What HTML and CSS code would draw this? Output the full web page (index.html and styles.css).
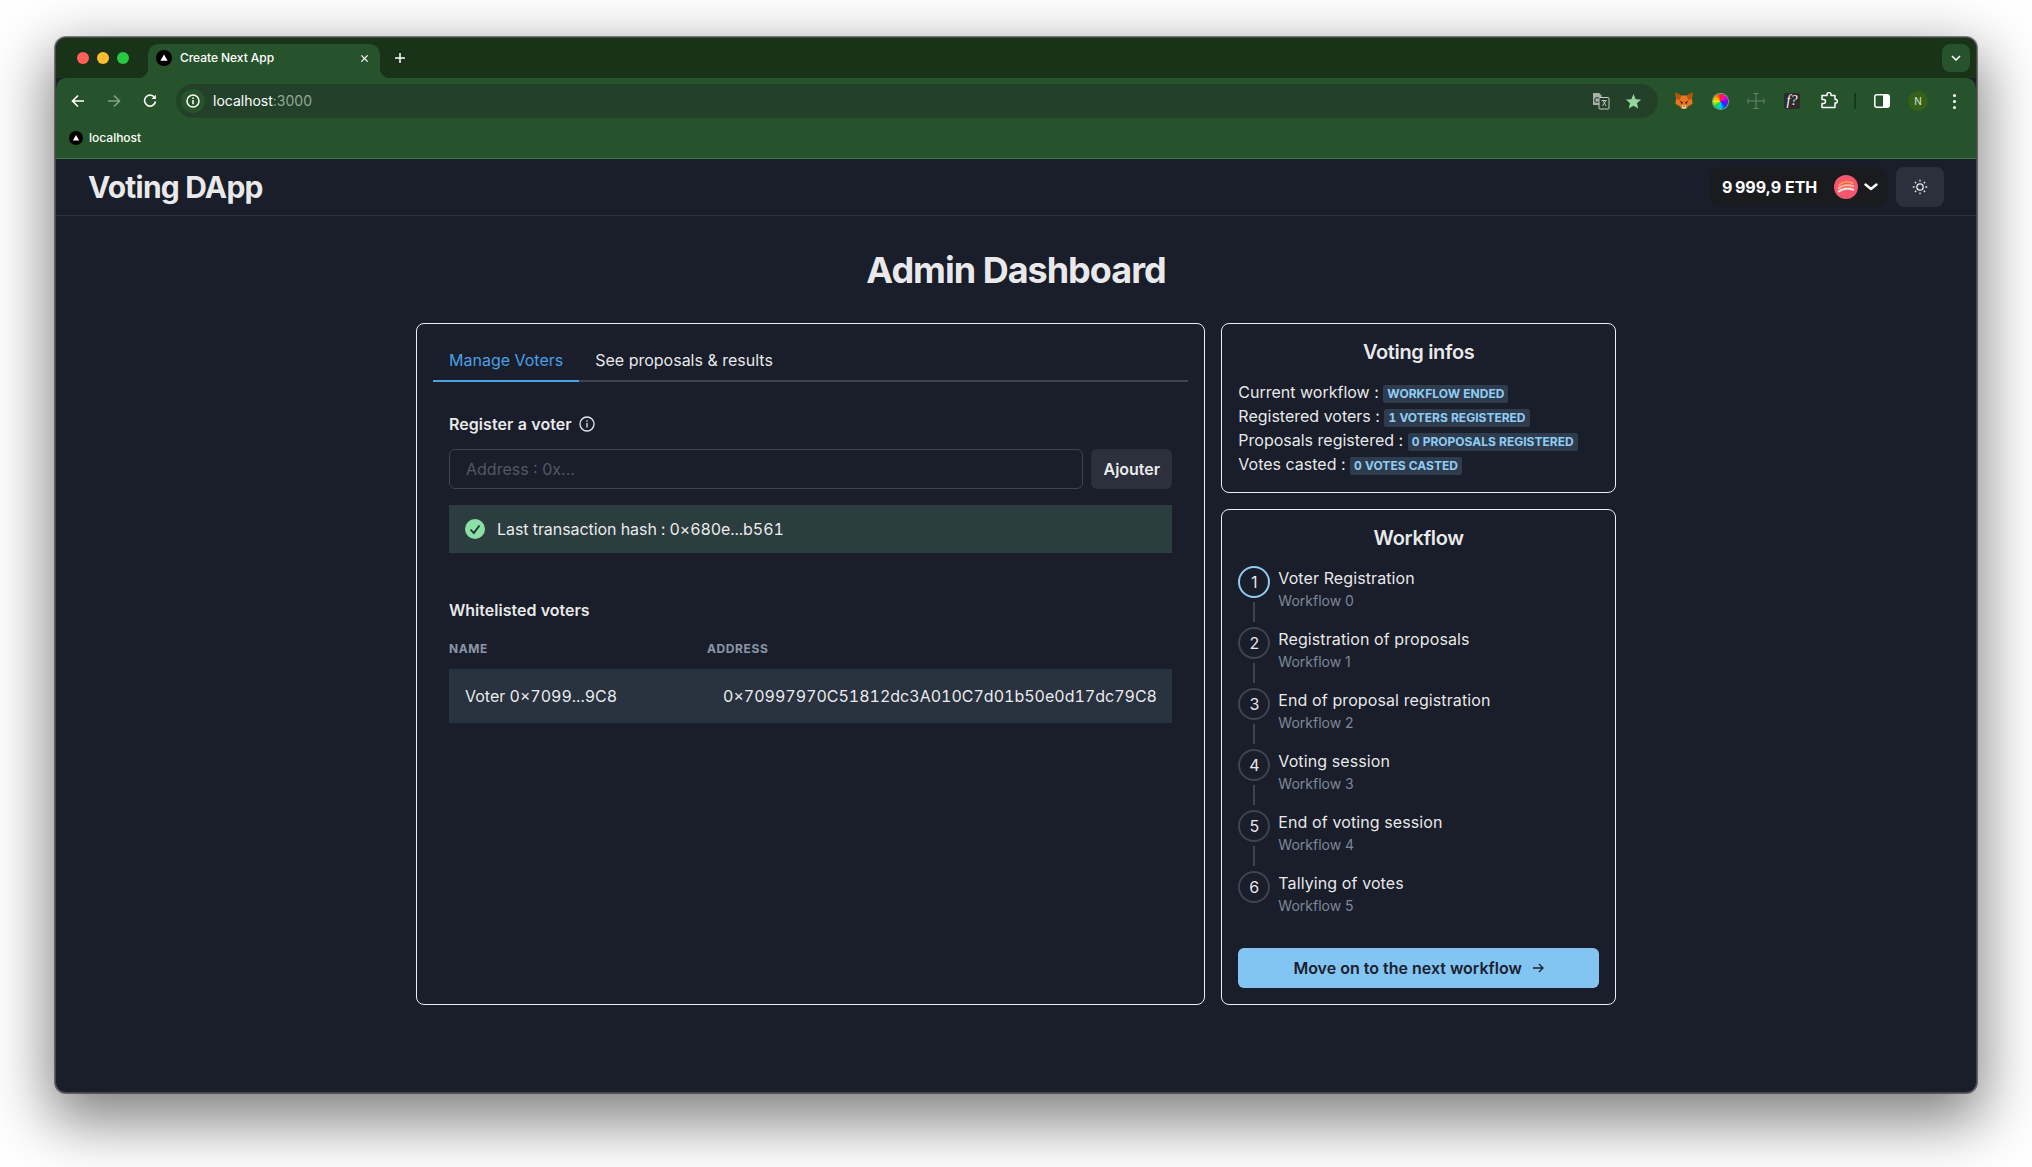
FILE: index.html
```html
<!DOCTYPE html>
<html lang="en">

<head>
    <meta charset="UTF-8">
    <meta name="viewport" content="width=device-width, initial-scale=1.0">
    <title>Create Next App</title>
    <link rel="stylesheet" href="styles.css">
</head>

<body>
    <div class="window">
        <!-- browser chrome -->
        <div class="tabstrip">
            <div class="lights">
                <span class="light light-red"></span>
                <span class="light light-yellow"></span>
                <span class="light light-green"></span>
            </div>
            <div class="tab">
                <svg class="favicon" viewBox="0 0 16 16"><circle cx="8" cy="8" r="8" fill="#000"/><path d="M8 4.600 11.600 10.800H4.400Z" fill="#fff"/></svg>
                <span class="tab-title">Create Next App</span>
                <svg class="tab-close" viewBox="0 0 10 10"><path d="M1.500 1.500 8.500 8.500M8.500 1.500 1.500 8.500" stroke="#fff" stroke-width="1.400"/></svg>
            </div>
            <svg class="tab-new" viewBox="0 0 12 12"><path d="M6 1V11M1 6H11" stroke="#fff" stroke-width="1.500"/></svg>
            <div class="tab-menu">
                <svg viewBox="0 0 10 6" width="10" height="6"><path d="M1 1 5 5 9 1" fill="none" stroke="#fff" stroke-width="1.600"/></svg>
            </div>
        </div>

        <div class="toolbar">
            <div class="navrow">
                <svg class="nav-icon" viewBox="0 0 14 14"><path d="M13 7H2M7 1.500 1.500 7 7 12.500" fill="none" stroke="#fff" stroke-width="1.600"/></svg>
                <svg class="nav-icon" viewBox="0 0 14 14"><path d="M1 7H12M7 1.500 12.500 7 7 12.500" fill="none" stroke="#83a186" stroke-width="1.600"/></svg>
                <svg class="nav-icon" viewBox="0 0 14 14"><path d="M12 4.200A5.500 5.500 0 1 0 12.500 7.500" fill="none" stroke="#fff" stroke-width="1.600"/><path d="M12.800 .8V5H8.600Z" fill="#fff"/></svg>
                <div class="omnibox">
                    <span class="site-info">
                        <svg viewBox="0 0 14 14" width="14" height="14"><circle cx="7" cy="7" r="6" fill="none" stroke="#fff" stroke-width="1.500"/><path d="M7 6V10.300M7 3.500V5" stroke="#fff" stroke-width="1.500"/></svg>
                    </span>
                    <span class="url">localhost<span class="url-port">:3000</span></span>
                    <svg class="translate-icon" viewBox="0 0 18 18"><path d="M1 1H7L9.500 3.500V13H1Z" fill="#a9b2a9"/><circle cx="5" cy="8" r="2.300" fill="none" stroke="#3f4a40" stroke-width="1.200"/><rect x="7" y="5.500" width="10" height="11.500" rx="1" fill="#26402b" stroke="#c5ccc5"/><path d="M9.500 8.500H14.500M11 8.500 14 14M14 8.500 10.500 14" fill="none" stroke="#c5ccc5" stroke-width=".9"/></svg>
                    <svg class="star-icon" viewBox="0 0 18 18"><path d="M9 1 11.300 6.500 17 7 12.700 10.800 14 16.500 9 13.500 4 16.500 5.300 10.800 1 7 6.700 6.500Z" fill="#93d69b"/></svg>
                </div>
                <div class="extensions">
                    <svg class="ext" viewBox="0 0 18 18"><path d="M.5 .5 6.500 3.500H11.500L17.500 .5 17 7 17.500 12 13.500 14 11 17H7L4.500 14 .5 12 1 7Z" fill="#e8761c"/><path d="M.5 .5 6.500 3.500 4.500 8 1 7ZM17.500 .5 11.500 3.500 13.500 8 17 7Z" fill="#b4560f"/><path d="M4.500 8.500 8 10.500 7 12.500ZM13.500 8.500 10 10.500 11 12.500Z" fill="#33241a"/><path d="M7 13.500H11L10.500 16.500H7.500Z" fill="#eadfd3"/><path d="M8 14H10L9 15.200Z" fill="#2a2019"/></svg>
                    <span class="ext ext-wheel"><span class="wheel"></span></span>
                    <svg class="ext" viewBox="0 0 18 18"><path d="M9 1.500V16.500M1 9H17M6.500 1.500H11.500M6.500 16.500H11.500M1 6.500V11.500M17 6.500V11.500" fill="none" stroke="#6f8174" stroke-width="1"/></svg>
                    <span class="ext ext-font">f?</span>
                    <svg class="ext" viewBox="0 0 18 18"><path d="M7 3.500V2.600A2 2 0 0 1 11 2.600V3.500H15V7.500H16A1.800 1.800 0 0 1 16 11H15V15.500H2V11.500H3.500A2 2 0 0 0 3.500 7.500H2V3.500Z" fill="none" stroke="#fff" stroke-width="1.500" stroke-linejoin="round"/></svg>
                    <span class="ext-divider"></span>
                    <svg class="ext ext-panel" viewBox="0 0 16 14"><rect x=".8" y=".8" width="14.400" height="12.400" rx="2" fill="none" stroke="#fff" stroke-width="1.500"/><path d="M9 .8H13.500A1.700 1.700 0 0 1 15.200 2.500V11.500A1.700 1.700 0 0 1 13.500 13.200H9Z" fill="#fff"/></svg>
                    <span class="profile">N</span>
                    <span class="kebab"><i></i><i></i><i></i></span>
                </div>
            </div>
            <div class="bookmarks">
                <svg class="favicon" viewBox="0 0 16 16"><circle cx="8" cy="8" r="8" fill="#000"/><path d="M8 4.600 11.600 10.800H4.400Z" fill="#fff"/></svg>
                <span>localhost</span>
            </div>
        </div>

        <!-- the app -->
        <div class="page">
            <header class="app-header">
                <h2 class="app-title">Voting DApp</h2>
                <div class="app-actions">
                    <div class="wallet">
                        <span class="balance">9&#8239;999,9 ETH</span>
                        <svg class="avatar" viewBox="0 0 24 24"><circle cx="12" cy="12" r="12" fill="#f5586e"/><path d="M4.500 10.500C9 6 15 6 19.500 8.500" fill="none" stroke="#f6a04d" stroke-width="1.800"/><path d="M4 13.500C9 9.500 15 9.500 20 11.500" fill="none" stroke="#f7c08a" stroke-width="1.800"/><path d="M4 17C9 13 15 13 20 15" fill="none" stroke="#e8dcd8" stroke-width="2.200"/></svg>
                        <svg class="wallet-chevron" viewBox="0 0 14 8"><path d="M1.500 1.500 7 6 12.500 1.500" fill="none" stroke="#fff" stroke-width="2.400" stroke-linecap="round" stroke-linejoin="round"/></svg>
                    </div>
                    <button class="theme-btn">
                        <svg viewBox="0 0 16 16" width="16" height="16"><circle cx="8" cy="8" r="3.200" fill="none" stroke="#e8e9eb" stroke-width="1.300"/><path d="M8 .8V2.600M8 13.400V15.200M.8 8H2.600M13.400 8H15.200M2.900 2.900 4.200 4.200M11.800 11.800 13.100 13.100M2.900 13.100 4.200 11.800M11.800 4.200 13.100 2.900" stroke="#e8e9eb" stroke-width="1.300"/></svg>
                    </button>
                </div>
            </header>

            <main class="dashboard">
                <h1 class="dashboard-title">Admin Dashboard</h1>
                <div class="dashboard-grid">
                    <section class="card">
                        <div class="tabs">
                            <div class="tabs-item tabs-item-active">Manage Voters</div>
                            <div class="tabs-item">See proposals &amp; results</div>
                        </div>
                        <div class="panel">
                            <div class="field-label">
                                Register a voter
                                <svg viewBox="0 0 16 16" width="16" height="16"><circle cx="8" cy="8" r="7" fill="none" stroke="#e8e9eb" stroke-width="1.300"/><path d="M8 7V11.500M8 4.300V5.700" stroke="#e8e9eb" stroke-width="1.300"/></svg>
                            </div>
                            <div class="field-row">
                                <input class="field-input" type="text" placeholder="Address : 0x...">
                                <button class="btn-gray">Ajouter</button>
                            </div>
                            <div class="alert">
                                <svg viewBox="0 0 20 20" width="20" height="20"><circle cx="10" cy="10" r="10" fill="#8be0a8"/><path d="M5.500 10.500 8.800 14 14.500 6.500" fill="none" stroke="#1f2f2c" stroke-width="1.800"/></svg>
                                <span>Last transaction hash : 0×680e...b561</span>
                            </div>
                            <h3 class="list-title">Whitelisted voters</h3>
                            <table class="voters">
                                <thead>
                                    <tr><th>Name</th><th>Address</th></tr>
                                </thead>
                                <tbody>
                                    <tr>
                                        <td>Voter 0×7099...9C8</td>
                                        <td>0×70997970C51812dc3A010C7d01b50e0d17dc79C8</td>
                                    </tr>
                                </tbody>
                            </table>
                        </div>
                    </section>

                    <div class="sidebar">
                        <section class="card">
                            <h2 class="card-title">Voting infos</h2>
                            <ul class="infos">
                                <li>Current workflow : <span class="badge">Workflow ended</span></li>
                                <li>Registered voters : <span class="badge">1 voters registered</span></li>
                                <li>Proposals registered : <span class="badge">0 proposals registered</span></li>
                                <li>Votes casted : <span class="badge">0 votes casted</span></li>
                            </ul>
                        </section>
                        <section class="card">
                            <h2 class="card-title">Workflow</h2>
                            <div class="steps">
                                <div class="step step-active">
                                    <div class="step-track"><span class="step-num">1</span><span class="step-line"></span></div>
                                    <div><div class="step-name">Voter Registration</div><div class="step-desc">Workflow 0</div></div>
                                </div>
                                <div class="step">
                                    <div class="step-track"><span class="step-num">2</span><span class="step-line"></span></div>
                                    <div><div class="step-name">Registration of proposals</div><div class="step-desc">Workflow 1</div></div>
                                </div>
                                <div class="step">
                                    <div class="step-track"><span class="step-num">3</span><span class="step-line"></span></div>
                                    <div><div class="step-name">End of proposal registration</div><div class="step-desc">Workflow 2</div></div>
                                </div>
                                <div class="step">
                                    <div class="step-track"><span class="step-num">4</span><span class="step-line"></span></div>
                                    <div><div class="step-name">Voting session</div><div class="step-desc">Workflow 3</div></div>
                                </div>
                                <div class="step">
                                    <div class="step-track"><span class="step-num">5</span><span class="step-line"></span></div>
                                    <div><div class="step-name">End of voting session</div><div class="step-desc">Workflow 4</div></div>
                                </div>
                                <div class="step">
                                    <div class="step-track"><span class="step-num">6</span></div>
                                    <div><div class="step-name">Tallying of votes</div><div class="step-desc">Workflow 5</div></div>
                                </div>
                            </div>
                            <button class="btn-next">
                                Move on to the next workflow
                                <svg viewBox="0 0 12 12" width="12" height="12"><path d="M1 6H11M7 2 11 6 7 10" fill="none" stroke="#1a202c" stroke-width="1.300"/></svg>
                            </button>
                        </section>
                    </div>
                </div>
            </main>
        </div>
    </div>
</body>

</html>
```

FILE: styles.css
```css
/* Global Styles */
* {
    box-sizing: border-box;
}

html, body {
    height: 100%;
}

body {
    margin: 0;
    overflow: hidden;
    background-color: #fff;
    font-family: Inter, "Noto Sans", sans-serif;
    font-size: 16px;
    line-height: 24px;
    color: rgba(255, 255, 255, 0.92);
}

h1, h2, h3, ul {
    margin: 0;
    padding: 0;
}

button {
    font-family: inherit;
    border: none;
}

/* Desktop window */
.window {
    display: flex;
    flex-direction: column;
    width: 1922px;
    height: 1056px;
    margin: 37px 0 0 55px;
    border: 1px solid #44474e;
    border-radius: 11px;
    overflow: hidden;
    background-color: #191e2a;
    box-shadow: 0 0 0 1px rgba(0, 0, 0, 0.45), 0 22px 60px 6px rgba(0, 0, 0, 0.5);
}

/* Tab strip */
.tabstrip {
    display: flex;
    align-items: flex-start;
    height: 40px;
    background-color: #183318;
}

.lights {
    display: flex;
    gap: 8px;
    margin: 14px 0 0 21px;
}

.light {
    width: 12px;
    height: 12px;
    border-radius: 50%;
}

.light-red { background-color: #ff5f57; }
.light-yellow { background-color: #febc2e; }
.light-green { background-color: #28c840; }

.tab {
    position: relative;
    z-index: 1;
    display: flex;
    align-items: center;
    width: 232px;
    height: 34px;
    margin: 6px 0 0 19px;
    padding: 0 11px 6px 8px;
    background-color: #26532b;
    border-radius: 10px 10px 0 0;
    color: #fff;
    font-size: 12px;
    line-height: 16px;
}

.tab::before,
.tab::after {
    content: "";
    position: absolute;
    bottom: 0;
    width: 10px;
    height: 10px;
}

.tab::before {
    left: -10px;
    background: radial-gradient(circle at 0 0, transparent 10px, #26532b 10.5px);
}

.tab::after {
    right: -10px;
    background: radial-gradient(circle at 100% 0, transparent 10px, #26532b 10.5px);
}

.favicon {
    flex: none;
    width: 16px;
    height: 16px;
}

.tab-title {
    flex: 1;
    margin-left: 8px;
    font-weight: 500;
    letter-spacing: -0.05px;
}

.tab-close {
    width: 9px;
    height: 9px;
}

.tab-new {
    width: 12px;
    height: 12px;
    margin: 14px 0 0 14px;
}

.tab-menu {
    display: flex;
    align-items: center;
    justify-content: center;
    width: 28px;
    height: 28px;
    margin: 6px 6px 0 auto;
    background-color: #26532b;
    border-radius: 8px;
}

/* Toolbar */
.toolbar {
    height: 81px;
    background-color: #26532b;
    border-bottom: 1px solid #417546;
    border-radius: 10px 10px 0 0;
}

.navrow {
    display: flex;
    align-items: center;
    height: 34px;
    margin-top: 6px;
    padding-left: 15px;
}

.nav-icon {
    width: 14px;
    height: 14px;
    margin-right: 22px;
}

.omnibox {
    display: flex;
    align-items: center;
    width: 1482px;
    height: 34px;
    margin-left: -3px;
    padding: 0 16px 0 5px;
    background-color: #234129;
    border-radius: 17px;
    font-size: 14px;
    color: #fff;
}

.site-info {
    display: flex;
    align-items: center;
    justify-content: center;
    width: 24px;
    height: 24px;
    background-color: #26532b;
    border-radius: 50%;
}

.url {
    flex: 1;
    margin-left: 8px;
}

.url-port {
    color: #93a796;
}

.translate-icon {
    width: 18px;
    height: 18px;
    margin-right: 15px;
}

.star-icon {
    width: 17px;
    height: 17px;
}

.extensions {
    display: flex;
    align-items: center;
    flex: 1;
    padding-left: 17px;
}

.ext {
    flex: none;
    width: 18px;
    height: 18px;
    margin-right: 18px;
}

.ext-wheel {
    display: flex;
    align-items: center;
    justify-content: center;
}

.wheel {
    width: 15px;
    height: 15px;
    border-radius: 50%;
    background: conic-gradient(#ff2020, #ff00d0, #8000ff, #0040ff, #00d0ff, #00e040, #e0f000, #ffa000, #ff2020);
    box-shadow: 0 0 0 1px #8fa394;
}

.ext-font {
    display: flex;
    align-items: center;
    justify-content: center;
    width: 16px;
    height: 16px;
    margin-left: 1px;
    margin-right: 20px;
    background-color: #2c2c2c;
    border-radius: 2px;
    color: #fff;
    font-family: "Liberation Serif", serif;
    font-style: italic;
    font-size: 14px;
    line-height: 16px;
}

.ext-divider {
    width: 2px;
    height: 16px;
    margin: 0 18px 0 -2px;
    background-color: #173a1c;
}

.ext-panel {
    width: 16px;
    height: 14px;
}

.profile {
    display: flex;
    align-items: center;
    justify-content: center;
    flex: none;
    width: 20px;
    height: 20px;
    border-radius: 50%;
    background-color: #36601a;
    color: #d5e6cf;
    font-size: 10px;
    line-height: 20px;
}

.kebab {
    display: flex;
    flex-direction: column;
    gap: 3px;
    margin-left: 25px;
}

.kebab i {
    width: 3px;
    height: 3px;
    border-radius: 50%;
    background-color: #fff;
}

.bookmarks {
    display: flex;
    align-items: center;
    gap: 6px;
    height: 40px;
    padding-left: 13px;
    color: #fff;
    font-size: 12px;
    font-weight: 500;
}

.bookmarks .favicon {
    width: 14px;
    height: 14px;
}

/* App page */
.page {
    flex: 1;
}

.app-header {
    display: flex;
    align-items: center;
    justify-content: space-between;
    height: 57px;
    padding: 0 32px;
    border-bottom: 1px solid #2d3340;
}

.app-title {
    font-size: 30px;
    line-height: 36px;
    font-weight: 700;
    letter-spacing: -0.8px;
}

.app-actions {
    display: flex;
    align-items: center;
    gap: 8px;
}

.wallet {
    display: flex;
    align-items: center;
    width: 179px;
    height: 40px;
    padding-left: 13px;
    background-color: #1a1b1f;
    border-radius: 12px;
}

.balance {
    font-weight: 700;
    color: #fff;
    white-space: nowrap;
}

.avatar {
    width: 24px;
    height: 24px;
    margin-left: auto;
}

.wallet-chevron {
    width: 14px;
    height: 8px;
    margin: 0 10px 0 6px;
}

.theme-btn {
    display: flex;
    align-items: center;
    justify-content: center;
    width: 48px;
    height: 40px;
    background-color: #2b303c;
    border-radius: 8px;
}

.dashboard {
    padding-top: 33px;
}

.dashboard-title {
    margin-bottom: 31px;
    font-size: 36px;
    line-height: 43px;
    font-weight: 700;
    letter-spacing: -1px;
    text-align: center;
}

.dashboard-grid {
    display: grid;
    grid-template-columns: 2fr 1fr;
    gap: 16px;
    width: 1200px;
    margin: 0 auto;
}

.card {
    padding: 16px;
    border: 1px solid rgba(255, 255, 255, 0.92);
    border-radius: 8px;
}

.card-title {
    margin-bottom: 16px;
    font-size: 20px;
    line-height: 24px;
    font-weight: 600;
    letter-spacing: -0.35px;
    text-align: center;
}

.sidebar {
    display: flex;
    flex-direction: column;
    gap: 16px;
}

/* Tabs */
.tabs {
    display: flex;
    border-bottom: 2px solid #3e4451;
}

.tabs-item {
    height: 42px;
    margin-bottom: -2px;
    padding: 8px 16px;
    border-bottom: 2px solid transparent;
}

.tabs-item-active {
    color: #4d9fe6;
    border-bottom-color: #4d9fe6;
}

.panel {
    padding: 30px 16px 0;
    height: 606px;
    font-variant-numeric: tabular-nums;
}

.field-label {
    display: flex;
    align-items: center;
    gap: 7px;
    margin-bottom: 13px;
    font-weight: 600;
    letter-spacing: 0.05px;
}

.field-row {
    display: flex;
    gap: 8px;
}

.field-input {
    flex: 1;
    height: 40px;
    padding: 0 16px;
    background: transparent;
    border: 1px solid #3e4451;
    border-radius: 6px;
    font-family: inherit;
    font-size: 16px;
    color: #fff;
}

.field-input::placeholder {
    color: #535864;
}

.btn-gray {
    width: 81px;
    height: 40px;
    background-color: #2b303c;
    border-radius: 6px;
    font-size: 16px;
    font-weight: 600;
    color: rgba(255, 255, 255, 0.92);
}

.alert {
    display: flex;
    align-items: center;
    gap: 12px;
    height: 48px;
    margin-top: 16px;
    padding: 0 16px;
    background-color: #2c3d3f;
    letter-spacing: -0.06px;
}

.list-title {
    margin: 45px 0 16px;
    font-size: 16px;
    font-weight: 600;
}

/* Voters table */
.voters {
    width: 100%;
    border-collapse: collapse;
    table-layout: fixed;
}

.voters th {
    padding: 3px 0 12px;
    font-size: 12px;
    line-height: 16px;
    font-weight: 700;
    letter-spacing: 0.6px;
    text-align: left;
    text-transform: uppercase;
    color: #8a96a8;
}

.voters th:first-child {
    width: 258px;
}

.voters td {
    height: 54px;
    padding: 0 16px;
    background-color: #29323f;
    white-space: nowrap;
}

/* Infos */
.infos {
    list-style: none;
}

.badge {
    display: inline-block;
    padding: 0 4px;
    background-color: #2e3c4e;
    border-radius: 2px;
    color: #90cdf4;
    font-size: 12px;
    line-height: 18px;
    font-weight: 700;
    font-variant-numeric: tabular-nums;
    text-transform: uppercase;
    white-space: nowrap;
}

/* Stepper */
.step {
    display: flex;
    gap: 8px;
    height: 61px;
}

.step-track {
    display: flex;
    flex-direction: column;
    align-items: center;
    width: 32px;
}

.step-num {
    flex: none;
    display: flex;
    align-items: center;
    justify-content: center;
    width: 32px;
    height: 32px;
    border: 2px solid #3e4451;
    border-radius: 50%;
}

.step-active .step-num {
    border-color: #90cdf4;
}

.step-line {
    flex: 1;
    width: 2px;
    margin: 4px 0 5px;
    background-color: #3e4451;
}

.step-name {
    letter-spacing: 0.1px;
}

.step-desc {
    padding-top: 1px;
    font-size: 14px;
    line-height: 20px;
    color: #7d8899;
}

.btn-next {
    display: flex;
    align-items: center;
    justify-content: center;
    gap: 10px;
    width: 100%;
    height: 40px;
    margin-top: 16px;
    background-color: #82c5f3;
    border-radius: 6px;
    font-size: 16px;
    font-weight: 600;
    color: #1a202c;
}
```
